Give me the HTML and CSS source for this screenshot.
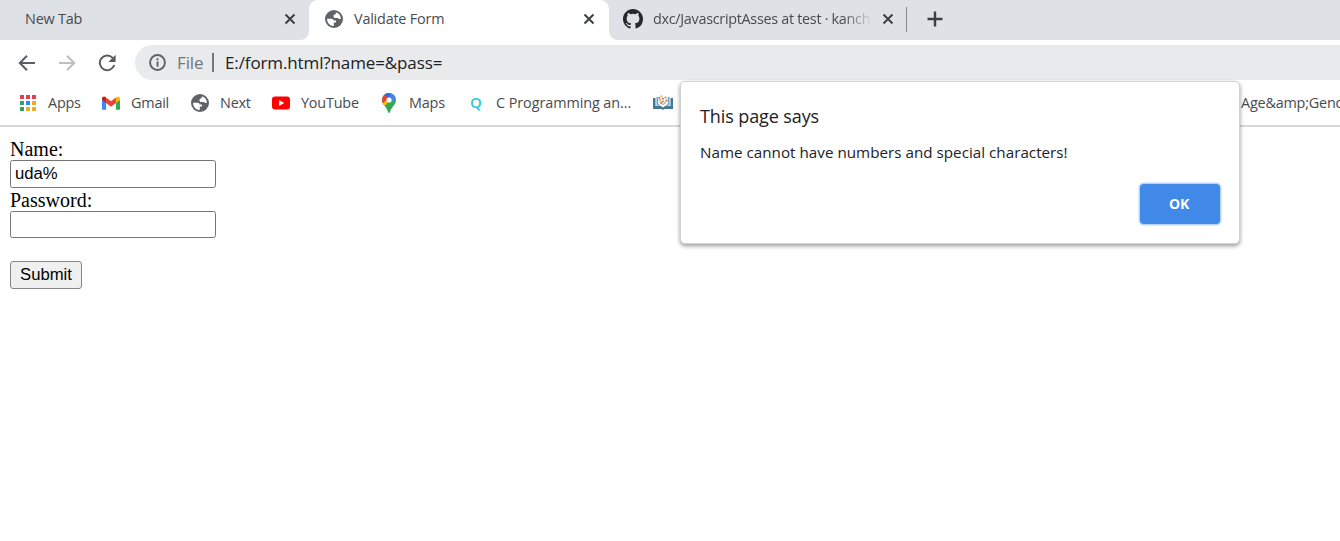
FILE: index.html
```html
<!DOCTYPE html>
<html lang="en">
<head>
<meta charset="utf-8">
<title>Validate Form</title>
<link rel="stylesheet" href="styles.css">
</head>
<body>
<svg class="defs" width="0" height="0" aria-hidden="true">
  <symbol id="globe" viewBox="0 0 18 18">
    <circle cx="9" cy="9" r="9" fill="#5f6368"/>
    <path d="M2.1 8.7H6.4C8 8.7 8.6 9.4 8.6 10.6H11V12.6H8.8V15.9C5 16 1.9 12.8 2.1 8.7Z" fill="#fff"/>
    <path d="M10.8 2.2C14 3 15.7 5.6 15.9 8.500C14.8 9.4 13.500 9 13 8H10.7C9.2 8 8.500 7.3 8.500 5.900C8.500 4.900 9.2 4.3 10.8 4.3Z" fill="#fff"/>
  </symbol>
  <symbol id="close" viewBox="0 0 12 12"><path d="M1.5 1.5 10.5 10.5M10.5 1.5 1.5 10.5" stroke="#3c4043" stroke-width="2" fill="none"/></symbol>
</svg>

<header class="browser">
  <div class="tabs">
    <div class="tab tab-first"><span class="tab-title t-new">New Tab</span><svg class="close"><use href="#close"/></svg></div>
    <div class="tab tab-active"><svg class="icon18"><use href="#globe"/></svg><span class="tab-title t-validate">Validate Form</span><svg class="close"><use href="#close"/></svg></div>
    <div class="tab tab-github">
      <svg class="icon-gh" viewBox="0 0 16 16"><path fill="#24292e" d="M8 0C3.58 0 0 3.58 0 8c0 3.54 2.29 6.53 5.47 7.59.4.07.55-.17.55-.38 0-.19-.01-.82-.01-1.49-2.01.37-2.53-.49-2.69-.94-.09-.23-.48-.94-.82-1.13-.28-.15-.68-.52-.01-.53.63-.01 1.08.58 1.23.82.72 1.21 1.87.87 2.33.66.07-.52.28-.87.51-1.07-1.78-.2-3.64-.89-3.64-3.95 0-.87.31-1.59.82-2.15-.08-.2-.36-1.02.08-2.12 0 0 .67-.21 2.2.82a7.6 7.6 0 0 1 4 0c1.53-1.04 2.2-.82 2.2-.82.44 1.1.16 1.92.08 2.12.51.56.82 1.27.82 2.15 0 3.07-1.87 3.75-3.65 3.95.29.25.54.73.54 1.48 0 1.07-.01 1.93-.01 2.2 0 .21.15.46.55.38A8.01 8.01 0 0 0 16 8c0-4.42-3.58-8-8-8Z"/></svg>
      <span class="tab-title t-github">dxc/JavascriptAsses at test · kanch</span><svg class="close"><use href="#close"/></svg>
    </div>
    <span class="tab-divider"></span>
    <svg class="plus" viewBox="0 0 16 16"><path d="M8 .5v15M.5 8h15" stroke="#3c4043" stroke-width="2.4"/></svg>
  </div>

  <div class="toolbar">
    <svg class="nav" viewBox="0 0 18 18"><path d="M17 9H2.2M9 1.8 1.8 9 9 16.2" fill="none" stroke="#5a5d61" stroke-width="2"/></svg>
    <svg class="nav" viewBox="0 0 18 18"><path d="M1 9h14.8M9 1.8 16.2 9 9 16.2" fill="none" stroke="#bdbfc1" stroke-width="2"/></svg>
    <svg class="nav" viewBox="0 0 18 18"><path d="M14.7 3.8A7.4 7.4 0 1 0 16.3 11" fill="none" stroke="#5a5d61" stroke-width="2"/><path d="M17.6.8v7.3h-7.2z" fill="#5a5d61"/></svg>
    <div class="omnibox">
      <svg class="info" viewBox="0 0 16 16"><circle cx="8" cy="8" r="7" fill="none" stroke="#5f6368" stroke-width="1.8"/><path d="M8 7v5M8 4v1.8" stroke="#5f6368" stroke-width="1.8"/></svg>
      <span class="scheme">File</span><span class="url-divider"></span><span class="url">E:/form.html?name=&amp;pass=</span>
    </div>
  </div>

  <nav class="bookmarks">
    <div class="bm bm-apps">
      <svg class="bm-icon" viewBox="0 0 18 18"><g fill="#e53e4f"><path d="M1 1h4v4H1zM7 1h4v4H7zM13 1h4v4h-4z"/></g><path d="M1 7h4v4H1zM1 13h4v4H1z" fill="#34a063"/><path d="M7 7h4v4H7z" fill="#2d8bf0"/><path d="M13 7h4v4h-4zM7 13h4v4H7zM13 13h4v4h-4z" fill="#f2aa25"/></svg><span class="bm-label">Apps</span></div>
    <div class="bm bm-gmail">
      <svg class="bm-icon" viewBox="0 0 18 18"><path d="M0 5v9.7c0 .7.5 1.1 1.1 1.1h3V8z" fill="#4285f4"/><path d="M18 5v9.7c0 .7-.5 1.1-1.1 1.1h-3V8z" fill="#34a853"/><path d="M13.9 3.7V9L18 6V4.4c0-1.7-2-2.5-3.3-1.5z" fill="#fbbc04"/><path d="M4.1 9V3.6L9 7.3l4.9-3.7V9L9 12.7z" fill="#ea4335"/><path d="M0 4.4V6l4.1 3V3.6l-.9-.7C2 2 0 2.7 0 4.4z" fill="#c5221f"/></svg><span class="bm-label">Gmail</span></div>
    <div class="bm bm-next"><svg class="bm-icon"><use href="#globe"/></svg><span class="bm-label">Next</span></div>
    <div class="bm bm-yt">
      <svg class="bm-icon" viewBox="0 0 18 18"><rect y="2.4" width="18" height="13.2" rx="3" fill="#f00"/><path d="M7.2 6v6l5-3z" fill="#fff"/></svg><span class="bm-label">YouTube</span></div>
    <div class="bm bm-maps">
      <svg class="pin" viewBox="0 0 14 20"><clipPath id="pin-shape"><path d="M7 0a7 7 0 0 1 7 7c0 5-4.5 6.7-5.8 11.5Q7 21.5 5.8 18.5C4.8 14 0 11.7 0 7a7 7 0 0 1 7-7z"/></clipPath><g clip-path="url(#pin-shape)"><path d="M0 0h14v20H0z" fill="#34a853"/><path d="M0 14V11l9-8.8 3 0-9.4 11z" fill="#fbbc04"/><path d="M3 0h11v5L9.6 9 7 4.4z" fill="#4285f4"/><path d="M1 0h6l2 3-5 2z" fill="#1a73e8"/><path d="M0 2l2.5-.8L6.5 5 0 11z" fill="#ea4335"/></g><circle cx="7" cy="7" r="2.6" fill="#fff"/></svg><span class="bm-label">Maps</span></div>
    <div class="bm bm-c"><span class="q">Q</span><span class="bm-label">C Programming an...</span></div>
    <div class="bm bm-book">
      <svg class="book" viewBox="0 0 20 16"><path d="M0 3h2.500v8h4.500q2 0 3 1.5Q11 11 13 11h4.500V3h2.500v11h-8q-1 0-2 1-1-1-2-1H0z" fill="#447895"/><path d="M3.500 2h1.700v7l4 2.500q-2-1-5.700-1zM16.500 2h-1.700v7l-4 2.500q2-1 5.700-1z" fill="#6fa3bd"/><path d="M7 4 10 10l3.500-5" fill="none" stroke="#a9c588" stroke-width="1"/><g fill="#e6575e"><circle cx="6.500" cy="3" r="1"/><circle cx="10" cy="3.800" r="1"/><circle cx="13.500" cy="5.500" r="1"/><circle cx="8" cy="8" r=".9"/></g><g fill="#e2b64c"><circle cx="8.500" cy="1.200" r="1"/><circle cx="7" cy="5.500" r="1"/><circle cx="11.700" cy="8" r="1"/></g><g fill="#50b9a1"><circle cx="12.500" cy="2.500" r="1.100"/><circle cx="10" cy="6.500" r="1"/></g></svg></div>
    <div class="bm bm-age"><span class="bm-label">Age&amp;amp;Gend</span></div>
  </nav>
</header>

<main class="page">
  <form class="form">
    <label for="name">Name:</label>
    <input id="name" class="field" type="text" value="uda%">
    <label for="pass">Password:</label>
    <input id="pass" class="field field-pass" type="password">
    <button class="submit" type="button">Submit</button>
  </form>
</main>

<section class="dialog" role="alertdialog">
  <h1 class="dialog-title">This page says</h1>
  <p class="dialog-text">Name cannot have numbers and special characters!</p>
  <button class="ok" type="button">OK</button>
</section>
</body>
</html>
```
FILE: styles.css
```css
* { box-sizing: border-box; }
body { margin: 0; width: 1340px; height: 541px; overflow: hidden; background: #fff; position: relative; font-family: "Open Sans", "Noto Sans", sans-serif; color: #484b4f; }
svg { display: block; flex: none; }
.defs { position: absolute; }
.browser { height: 127px; border-bottom: 2px solid #d6d7d8; }
.tabs { display: flex; height: 40px; background: #dee1e6; }
.tab { display: flex; align-items: center; height: 40px; padding-bottom: 2px; font-size: 14.4px; white-space: nowrap; flex: none; }
.tab-first { width: 309px; padding-left: 25px; padding-right: 13px; }
.tab-active { width: 300px; padding-left: 16px; padding-right: 14px; background: #fff; border-radius: 9px 9px 0 0; position: relative; }
.tab-active::before, .tab-active::after { content: ""; position: absolute; bottom: 0; width: 9px; height: 9px; }
.tab-active::before { left: -9px; background: radial-gradient(circle at 0 0, #dee1e6 8.5px, #fff 9.5px); }
.tab-active::after { right: -9px; background: radial-gradient(circle at 100% 0, #dee1e6 8.5px, #fff 9.5px); }
.tab-github { width: 285px; padding-left: 14px; }
.close { width: 12px; height: 12px; margin-left: auto; }
.icon18 { width: 18px; height: 18px; margin-right: 11px; }
.icon-gh { width: 20px; height: 20px; margin-right: 10px; }
.tab-title { line-height: 20px; }
.t-new { letter-spacing: -.2px; }
.t-validate { letter-spacing: -.2px; }
.t-github { width: 220px; overflow: hidden; letter-spacing: -.3px; -webkit-mask-image: linear-gradient(90deg, #000 190px, transparent 220px); mask-image: linear-gradient(90deg, #000 190px, transparent 220px); }
.tab-github .close { margin-left: 9px; }
.tab-divider { width: 1px; height: 25px; margin: 7px 20px 0 12px; background: #85888c; flex: none; }
.plus { width: 16px; height: 16px; margin-top: 11px; }
.toolbar { display: flex; height: 45px; align-items: center; padding-left: 18px; }
.nav { width: 18px; height: 18px; margin-right: 22px; }
.nav:nth-child(3) { margin-right: 19px; }
.omnibox { display: flex; align-items: center; flex: 1; height: 35px; border-radius: 18px 0 0 18px; background: #e9eaec; padding-left: 14px; font-size: 17px; }
.info { width: 17px; height: 17px; margin-right: 11px; }
.scheme { width: 28px; color: #74777b; letter-spacing: -.1px; }
.url-divider { width: 1.5px; height: 19px; margin: 0 11.500px 0 7px; background: #74777b; }
.url { color: #202124; letter-spacing: -.12px; }
.bookmarks { display: flex; height: 40px; padding: 0 0 5px 19px; overflow: hidden; }
.bm { display: flex; align-items: center; flex: none; font-size: 14.4px; white-space: nowrap; }
.bm-icon { width: 18px; height: 18px; margin-right: 11px; }
.bm-label { letter-spacing: -.2px; padding-bottom: 1px; }
.bm-apps { width: 83px; }
.bm-gmail { width: 89px; }
.bm-next { width: 81px; }
.bm-yt { width: 110px; }
.bm-maps { width: 87px; }
.bm-c { width: 184px; }
.bm-c .bm-label { letter-spacing: -.07px; }
.bm-book { width: 588px; }
.pin { width: 14px; height: 20px; margin-right: 13px; }
.q { width: 27px; padding-left: 1px; padding-bottom: 1px; color: #29c9dc; font-size: 15px; font-weight: 600; }
.book { width: 20px; height: 16px; }
.page { padding: 12px 10px; }
.form { display: flex; flex-direction: column; align-items: flex-start; color: #000; font: 20px/21px "Liberation Serif", serif; }
.field { width: 206px; height: 28px; margin: 0 0 2px; padding: 1px 4px; border: 1px solid #767676; border-radius: 2.5px; background: #fff; font: 16.7px "Liberation Sans", sans-serif; }
.field-pass { height: 27px; margin: 0; }
.submit { width: 72px; height: 28px; margin-top: 23px; padding: 0; border: 1px solid #85858a; border-radius: 3px; background: #f0f0f0; color: #000; font: 16.7px "Liberation Sans", sans-serif; }
.dialog { position: absolute; left: 680px; top: 81px; width: 560px; height: 163px; padding: 21px 19px 18px 19px; display: flex; flex-direction: column; background: #fff; border: 1px solid #d2d2d4; border-radius: 5px; box-shadow: 0 2px 4px rgba(0,0,0,.4); color: #202124; }
.dialog-title { margin: 0; font-size: 18px; line-height: 26px; font-weight: 400; letter-spacing: -.1px; }
.dialog-text { margin: 12px 0 0; font-size: 15.2px; line-height: 22px; letter-spacing: .02px; }
.ok { width: 80px; height: 40px; margin: 21px 0 0 auto; padding: 0 2px 2px 0; border: 0; border-radius: 4px; background: #4189e9; box-shadow: 0 0 0 1.5px #b9d5fb; color: #fff; font: 700 14px "Open Sans", sans-serif; letter-spacing: -.3px; }
```
